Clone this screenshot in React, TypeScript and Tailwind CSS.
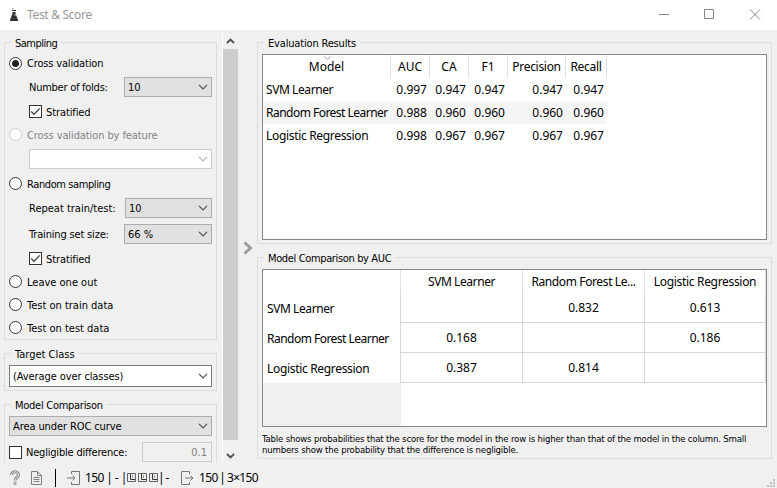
import React from "react";

const tahoma = "font-['DejaVu_Sans_Condensed','DejaVu_Sans',sans-serif] [font-stretch:condensed]";
const segoe = "font-['Noto_Sans',sans-serif]";

function Group({ title, tracking = "", className, children }: { title: string; tracking?: string; className: string; children: React.ReactNode }) {
  return (
    <section className={`flex shrink-0 flex-col border border-[#dcdcdc] ${className}`}>
      <h2 className={`-mt-2 ml-[6px] h-[14px] w-fit shrink-0 whitespace-nowrap bg-[#f0f0f0] px-1 pt-px text-[11px] leading-[15px] ${tracking}`}>{title}</h2>
      {children}
    </section>
  );
}

function Chevron({ muted }: { muted?: boolean }) {
  return (
    <svg width="10" height="6" viewBox="0 0 10 6" className="shrink-0" fill="none" stroke={muted ? "#b4b4b4" : "#505050"} strokeWidth="1.2">
      <path d="M1 .8 5 4.8 9 .8" />
    </svg>
  );
}

function Combo({ value, className, muted }: { value?: string; className: string; muted?: boolean }) {
  return (
    <div className={`flex shrink-0 items-center justify-between border pr-[3px] pl-[3px] ${className}`}>
      <span className="pt-px whitespace-nowrap">{value}</span>
      <Chevron muted={muted} />
    </div>
  );
}

function Radio({ label, checked, disabled, className }: { label: string; checked?: boolean; disabled?: boolean; className: string }) {
  return (
    <div className={`flex shrink-0 items-center gap-[5px] pl-1 ${disabled ? "text-[#838383]" : ""} ${className}`}>
      <span className={`flex size-[13px] items-center justify-center rounded-full border bg-white ${disabled ? "border-[#cccccc]" : "border-[#333333]"}`}>
        {checked && <span className="size-[7px] rounded-full bg-[#222]" />}
      </span>
      <span className="pt-[2px] whitespace-nowrap">{label}</span>
    </div>
  );
}

function Check({ checked }: { checked?: boolean }) {
  return (
    <span className="flex size-[13px] shrink-0 items-center justify-center border border-[#333] bg-white">
      {checked && (
        <svg width="11" height="11" viewBox="0 0 11 11" fill="none" stroke="#333" strokeWidth="1.2">
          <path d="M1.3 5.5 4 8.3 9.7 2.4" />
        </svg>
      )}
    </span>
  );
}

const gray = "border-[#adadad] bg-[#e1e1e1]";

function Sidebar() {
  return (
    <div className="flex h-[431px] w-[222px] flex-col overflow-hidden pt-[10px] pl-1">
      <Group title="Sampling" tracking="tracking-[-0.5px]" className="h-[298px] w-[213px]">
        <Radio label="Cross validation" checked className="h-7 tracking-[-0.17px]" />
        <div className="flex h-5 shrink-0 items-center pl-6">
          <span className="w-[95px] pt-[2px] tracking-[-0.25px]">Number of folds:</span>
          <Combo value="10" className={`h-5 w-[88px] ${gray}`} />
        </div>
        <div className="flex h-[29px] shrink-0 items-center gap-1 pl-6 tracking-[-0.1px]"><Check checked /><span className="pt-[2px]">Stratified</span></div>
        <Radio label="Cross validation by feature" disabled className="h-[17px] tracking-[-0.1px]" />
        <Combo muted className="mt-[6px] ml-6 h-5 w-[183px] border-[#cccccc] bg-white" />
        <Radio label="Random sampling" className="h-[29px] tracking-[-0.4px]" />
        <div className="flex h-5 shrink-0 items-center pl-6">
          <span className="w-24 pt-[2px]">Repeat train/test:</span>
          <Combo value="10" className={`h-5 w-[87px] ${gray}`} />
        </div>
        <div className="mt-[6px] flex h-5 shrink-0 items-center pl-6">
          <span className="w-[95px] pt-[2px] tracking-[-0.17px]">Training set size:</span>
          <Combo value="66 %" className={`h-5 w-[88px] ${gray}`} />
        </div>
        <div className="flex h-[26px] shrink-0 items-center gap-1 pt-[3px] pl-6 tracking-[-0.1px]"><Check checked /><span className="pt-[2px]">Stratified</span></div>
        <Radio label="Leave one out" className="h-[23px]" />
        <Radio label="Test on train data" className="h-[23px]" />
        <Radio label="Test on test data" className="h-[23px]" />
      </Group>
      <Group title="Target Class" className="mt-[13px] h-[38px] w-[213px]">
        <Combo value="(Average over classes)" className="mt-[5px] ml-1 h-[22px] w-[203px] border-[#7a7a7a] bg-white tracking-[-0.1px]" />
      </Group>
      <Group title="Model Comparison" tracking="tracking-[-0.27px]" className="mt-[13px] h-[70px] w-[213px]">
        <Combo value="Area under ROC curve" className={`mt-[5px] ml-1 h-5 w-[203px] tracking-[-0.1px] ${gray}`} />
        <div className="mt-[6px] ml-1 flex h-5 w-[203px] shrink-0 items-center">
          <Check />
          <span className="flex-1 pt-px pl-1 tracking-[-0.2px]">Negligible difference:</span>
          <span className="flex h-5 w-[70px] items-center justify-end border border-[#cccccc] pt-[2px] pr-1 text-[#838383]">0.1</span>
        </div>
      </Group>
    </div>
  );
}

function Scrollbar() {
  return (
    <div className="flex h-[431px] w-[16px] shrink-0 flex-col items-center border-l border-white">
      <div className="flex h-[17px] items-center">
        <svg width="9" height="6" viewBox="0 0 9 6" fill="none" stroke="#505050" strokeWidth="1.8"><path d="M1 5 4.5 1.5 8 5" /></svg>
      </div>
      <div className="h-[391px] w-[15px] bg-[#cdcdcd]" />
      <div className="flex h-[23px] items-center pt-[9px]">
        <svg width="9" height="6" viewBox="0 0 9 6" fill="none" stroke="#505050" strokeWidth="1.8"><path d="M1 1 4.5 4.5 8 1" /></svg>
      </div>
    </div>
  );
}

const results = [
  ["SVM Learner", "0.997", "0.947", "0.947", "0.947", "0.947"],
  ["Random Forest Learner", "0.988", "0.960", "0.960", "0.960", "0.960"],
  ["Logistic Regression", "0.998", "0.967", "0.967", "0.967", "0.967"],
];
const resultCols = "grid grid-cols-[128px_39px_39px_39px_58px_41px]";

// Letter spacing of the wider names in the tables.
const nameTracking: Record<string, string> = {
  "SVM Learner": "tracking-[-0.42px]",
  "Random Forest Learner": "tracking-[-0.52px]",
  "Logistic Regression": "tracking-[-0.32px]",
  "Random Forest Le...": "tracking-[-0.38px]",
  Precision: "tracking-[-0.3px]",
  Recall: "tracking-[-0.3px]",
};

function Results() {
  return (
    <Group title="Evaluation Results" tracking="tracking-[-0.17px]" className="h-[202px] w-[515px]">
      <div className={`mt-[5px] ml-1 h-[186px] w-[505px] shrink-0 border border-[#828790] bg-white text-[12px] ${segoe}`}>
        <div className={`${resultCols} h-[23px] text-center leading-[22px]`}>
          {["Model", "AUC", "CA", "F1", "Precision", "Recall"].map((h, i) => (
            <div key={h} className={`relative border-r border-[#e2e2e2] pt-px ${nameTracking[h] ?? ""}`}>
              {i === 0 && (
                <svg width="7" height="4" viewBox="0 0 7 4" className="absolute top-[1px] left-[61px]" fill="none" stroke="#999"><path d="M.4.4 3.5 3.4 6.6.4" /></svg>
              )}
              {h}
            </div>
          ))}
        </div>
        {results.map((r, i) => (
          <div key={r[0]} className={`${resultCols} h-[23px] w-[344px] leading-[23px] ${i === 1 ? "bg-[#f5f5f5]" : ""}`}>
            {r.map((c, j) => (
              <span key={j} className={`whitespace-nowrap ${j === 0 ? `pl-[3px] ${nameTracking[c]}` : "pr-[3px] text-right"}`}>{c}</span>
            ))}
          </div>
        ))}
      </div>
    </Group>
  );
}

const matrix = [
  ["SVM Learner", "", "0.832", "0.613"],
  ["Random Forest Learner", "0.168", "", "0.186"],
  ["Logistic Regression", "0.387", "0.814", ""],
];
const matrixCols = "grid grid-cols-[138px_122px_122px_121px]";

function Comparison() {
  return (
    <Group title="Model Comparison by AUC" tracking="tracking-[-0.36px]" className="mt-[13px] h-[202px] w-[515px]">
      <div className={`mt-[5px] ml-1 h-[158px] w-[505px] shrink-0 border border-[#828790] bg-white text-[12px] ${segoe}`}>
        <div className={`${matrixCols} h-[23px] text-center leading-[22px]`}>
          {["", "SVM Learner", "Random Forest Le...", "Logistic Regression"].map((h) => (
            <div key={h} className={`border-r border-[#e2e2e2] pt-px ${nameTracking[h] ?? ""}`}>{h}</div>
          ))}
        </div>
        {matrix.map((r) => (
          <div key={r[0]} className={`${matrixCols} h-[30px]`}>
            {r.map((c, j) => (
              <span key={j} className={j === 0 ? `border-r border-[#d8d8d8] pt-[2px] pl-1 leading-[28px] whitespace-nowrap ${nameTracking[c]}` : "border-r border-b border-[#d8d8d8] text-center leading-[29px]"}>{c}</span>
            ))}
          </div>
        ))}
        <div className="h-[43px] w-[138px] bg-[#f0f0f0]" />
      </div>
      <p className="mt-[6px] ml-1 w-[500px] text-[9.5px] leading-[11px] tracking-[-0.17px]">
        <span className="block whitespace-nowrap">Table shows probabilities that the score for the model in the row is higher than that of the model in the column. Small</span>
        <span className="block whitespace-nowrap">numbers show the probability that the difference is negligible.</span>
      </p>
    </Group>
  );
}

function Cells() {
  return (
    <svg width="31" height="9" viewBox="0 0 31 9" className="ml-[2px] shrink-0" fill="none">
      {[0, 11, 22].map((x) => (
        <g key={x}>
          <path d={`M${x + 0.5} .5h8v8h-8z`} stroke="#66606a" />
          <path d={`M${x + 3.5} 1v5.5h4.5`} stroke="#333" />
          <path d={`M${x + 5.5} 2v3`} stroke="#a9957a" />
        </g>
      ))}
    </svg>
  );
}

function StatusBar() {
  return (
    <footer className={`flex h-[25px] items-center pt-1 text-[12px] leading-[18px] whitespace-nowrap ${segoe}`}>
      <svg width="12" height="16" viewBox="0 0 12 16" className="ml-[9px]" fill="none" stroke="#8a8a8a"><path d="M2.5 5C2.5 .8 9.5 .8 9.5 5 9.5 7.5 6 7.2 6 10.5" strokeWidth="3" /><path d="M2.5 5C2.5 .8 9.5 .8 9.5 5 9.5 7.5 6 7.2 6 10.5" stroke="#f0f0f0" strokeWidth="1" /><circle cx="6" cy="13.3" r="1.2" /></svg>
      <svg width="12" height="14" viewBox="0 0 12 14" className="ml-[9px]" fill="none" stroke="#808080"><path d="M1.5 .5h6L11.5 4.5v9h-10zM7.5 1v3.5h4M3.5 6.5h6M3.5 8.5h6M3.5 10.5h6" /></svg>
      <span className="ml-[13px] h-[18px] w-px bg-black" />
      <svg width="13" height="14" viewBox="0 0 13 14" className="ml-[11px] shrink-0" fill="none" stroke="#777"><path d="M4.5 3V.5h8v13h-8V11M0 7h8M5.5 4.5 8 7 5.5 9.5" /></svg>
      <span className="ml-[5px] w-10 tracking-[-0.6px]">150 | - |</span><Cells />
      <span className="w-[13px] tracking-[-0.6px] [word-spacing:-1px]">| -</span>
      <svg width="13" height="14" viewBox="0 0 13 14" className="ml-[10px] shrink-0" fill="none" stroke="#777"><path d="M8.5 3V.5h-8v13h8V11M4 7h8M9.5 4.5 12 7 9.5 9.5" /></svg>
      <span className="ml-[5px] tracking-[-0.65px] [word-spacing:-0.8px]">150 | 3×150</span>
      <svg width="8" height="8" viewBox="0 0 8 8" className="mr-[2px] mb-[1px] ml-auto self-end" fill="#bfbfbf"><path d="M6 0h2v2H6zM3 3h2v2H3zM6 3h2v2H6zM0 6h2v2H0zM3 6h2v2H3zM6 6h2v2H6z" /></svg>
    </footer>
  );
}

export default function App() {
  return (
    <div className={`h-[488px] w-[777px] overflow-hidden bg-[#f0f0f0] text-[11px] leading-[14px] text-black ${tahoma}`}>
      <header className={`flex h-[30px] items-center bg-white text-[12px] text-[#999] ${segoe}`}>
        <svg width="10" height="14" viewBox="0 0 10 14" className="ml-[9px]" fill="#333"><path d="M3 2h4v1H3zM3.5 4h3v1.5L9 12H1l2.5-6.5z" /><path d="M1 12h8v1H1z" /><circle cx="4" cy=".8" r=".7" fill="#888" /><circle cx="6" cy="7" r=".7" fill="#fff" /></svg>
        <span className="ml-2 tracking-[-0.33px]">Test &amp; Score</span>
        <svg width="104" height="12" viewBox="0 0 104 12" className="mr-4 ml-auto" fill="none" stroke="#888"><path d="M2 5.5h10M47.5 .5h9v9h-9zM93 .5l10 10M103 .5 93 10.5" /></svg>
      </header>
      <main className="flex h-[433px] pt-[2px]">
        <Sidebar />
        <Scrollbar />
        <div className="flex w-[19px] shrink-0 items-center justify-center">
          <svg width="10" height="14" viewBox="0 0 10 14" fill="none" stroke="#9c9c9c" strokeWidth="3"><path d="M1.5 1.5 7.5 7 1.5 12.5" /></svg>
        </div>
        <div className="flex flex-col pt-[10px]">
          <Results />
          <Comparison />
        </div>
      </main>
      <StatusBar />
    </div>
  );
}
